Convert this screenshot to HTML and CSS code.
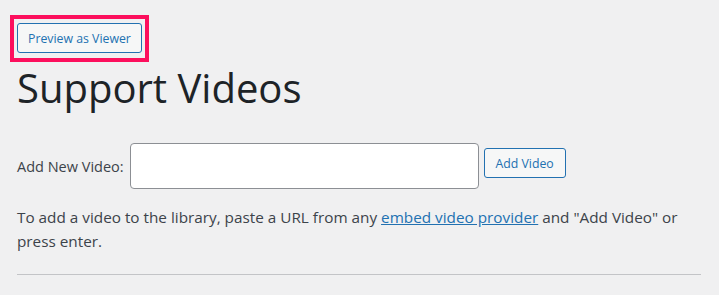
FILE: index.html
```html
<!DOCTYPE html>
<html lang="en">
  <head>
    <meta charset="UTF-8" />
    <meta name="viewport" content="width=device-width, initial-scale=1.0" />
    <title>Support Videos</title>
    <link rel="stylesheet" href="styles.css">
  </head>
  <body>
    <div class="wrap">
      <!-- preview button, highlighted -->
      <div class="highlight">
        <button type="button" class="button">Preview as Viewer</button>
      </div>
      <h1 class="title">Support Videos</h1>
      <!-- add video form -->
      <form class="add-row">
        <label for="video-url" class="add-label">Add New Video:</label>
        <input type="text" id="video-url" class="add-input" />
        <button type="button" class="button add-button">Add Video</button>
      </form>
      <p class="desc">
        To add a video to the library, paste a URL from any
        <a href="#">embed video provider</a> and "Add Video" or press enter.
      </p>
      <hr class="divider" />
    </div>
  </body>
</html>
```

FILE: styles.css
```css
* {
  box-sizing: border-box;
}
body {
  margin: 0;
  background: #f0f0f1;
  font-family: "Open Sans", "Noto Sans", sans-serif;
  color: #3c434a;
  font-size: 15.3px;
}
.wrap {
  padding: 15px 18px 0 17px;
}
.highlight {
  display: inline-block;
  margin-left: -7px;
  padding: 4px 3px 5px 3px;
  border: 4px solid #fc0f5d;
}
.button {
  display: block;
  height: 30px;
  padding: 0 10px;
  font-family: inherit;
  font-size: 12.3px;
  color: #2271b1;
  background: #f6f7f7;
  border: 1px solid #2271b1;
  border-radius: 3px;
}
.title {
  margin: 0;
  font-size: 40px;
  font-weight: 400;
  line-height: 52px;
  color: #1d2327;
}
.add-row {
  display: flex;
  align-items: flex-start;
  margin-top: 29px;
}
.add-label {
  margin-top: 14px;
  margin-right: 6px;
  font-size: 14.5px;
  color: #3c434a;
}
.add-input {
  width: 349px;
  height: 46px;
  border: 1px solid #8c8f94;
  border-radius: 4px;
  background: #fff;
}
.add-button {
  margin-top: 5px;
  margin-left: 5px;
  width: 82px;
  padding: 0;
}
.desc {
  margin: 17px 0 0;
  line-height: 23.5px;
}
.desc a {
  color: #2271b1;
}
.divider {
  margin: 21px 0 0;
  border: 0;
  border-top: 1px solid #c3c4c7;
}
```
